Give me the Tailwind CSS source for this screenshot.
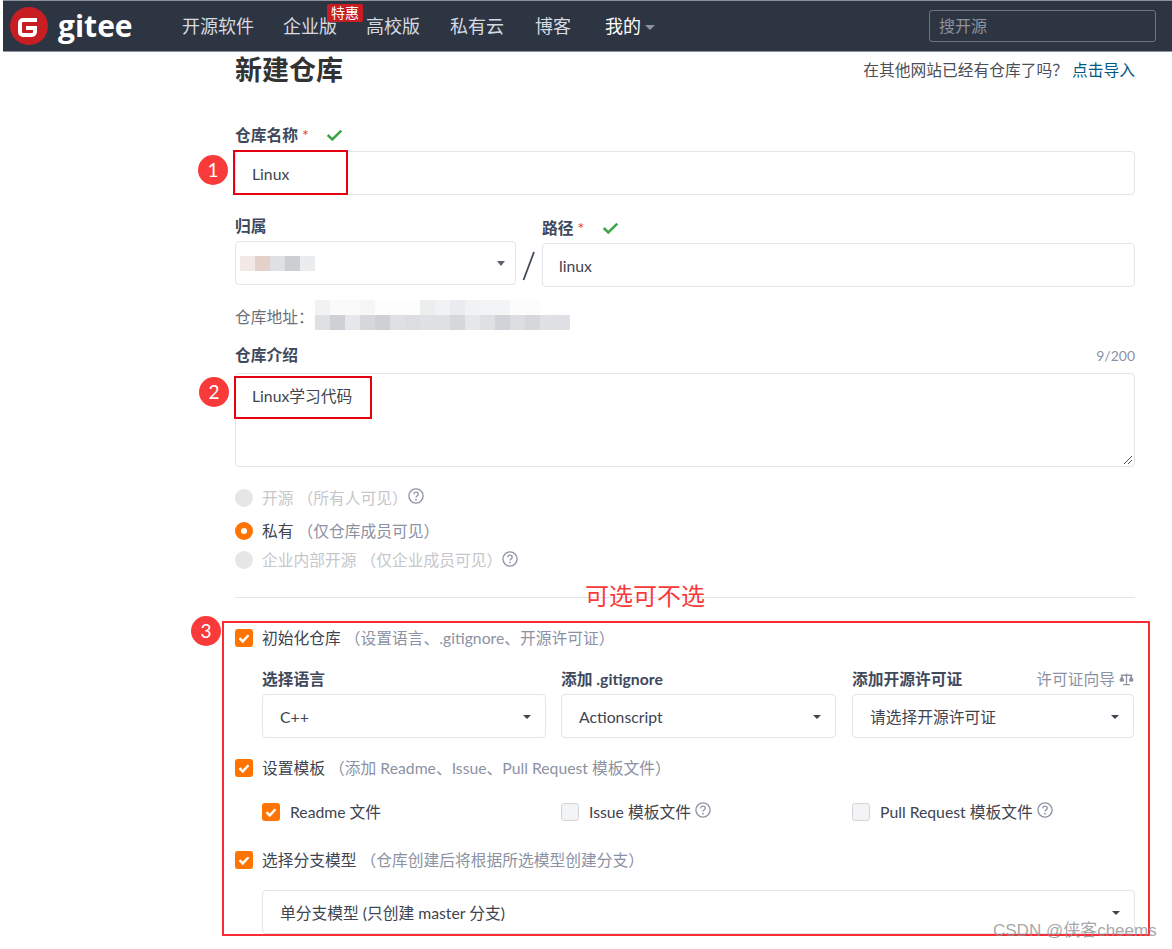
<!DOCTYPE html>
<html lang="zh-CN">
<head>
    <meta charset="UTF-8" />
    <meta name="viewport" content="width=device-width, initial-scale=1.0" />
    <title>新建仓库 - Gitee</title>
    <script src="https://cdn.jsdelivr.net/npm/@tailwindcss/browser@4"></script>
</head>
<body class="relative h-[949px] w-[1172px] overflow-hidden bg-white text-[15.75px] text-[#40485b] font-[family-name:Lato,'Noto_Sans_CJK_SC',sans-serif]">
<svg class="hidden">
    <symbol id="q" viewBox="0 0 16 16"><circle cx="8" cy="8" r="7.1" fill="none" stroke="#8c92a4" stroke-width="1.3"/><path d="M5.8 6.3c0-1.3 1-2.1 2.2-2.1s2.2.8 2.2 2c0 1.7-2.2 1.7-2.2 3.4" fill="none" stroke="#8c92a4" stroke-width="1.3"/><circle cx="8" cy="11.6" r=".9" fill="#8c92a4"/></symbol>
    <symbol id="tick" viewBox="0 0 18 18"><path d="M4.500 9.200l3.200 3.200 5.800-6.200" fill="none" stroke="#fff" stroke-width="2.400"/></symbol>
    <symbol id="ok" viewBox="0 0 16 12"><path d="M1.200 6l4.600 4.400L14.800 1.600" fill="none" stroke="#3fa648" stroke-width="2.600"/></symbol>
</svg>

<!-- 顶部导航 -->
<header class="mt-px ml-[3px] flex h-[51px] items-center border-b border-[#8d929c] bg-[#2e3542] shadow-[0_-1px_0_#8d929c]">
    <div class="mt-[-1px] ml-[7px] flex w-[172px] items-center gap-[10px]">
        <svg class="h-[38px] w-[38px] shrink-0" viewBox="0 0 38 38">
            <circle cx="19" cy="19" r="19" fill="#c71d23"/>
            <path d="M8 16a5 5 0 0 1 5-5h14v4H13a1 1 0 0 0-1 1v9a1 1 0 0 0 1 1h9a1 1 0 0 0 1-1v-2h-7v-4h11v6a6 6 0 0 1-5 5H13a5 5 0 0 1-5-5z" fill="#fff"/>
        </svg>
        <span class="text-[30px] leading-none font-bold text-white font-[family-name:'Open_Sans',sans-serif]">gitee</span>
    </div>
    <nav class="flex items-center gap-[29px] text-[18px] text-[#d7dae0]">
        <a>开源软件</a>
        <a class="relative">企业版<span class="absolute top-[-9px] left-[44px] rounded-[2px] bg-[#c71d23] px-[4px] text-[14px] leading-[18px] whitespace-nowrap text-white">特惠</span></a>
        <a>高校版</a>
        <a class="ml-px">私有云</a>
        <a class="ml-[2px]">博客</a>
        <a class="ml-[5px] flex items-center gap-[4px] text-white">我的<span class="mt-[3px] h-0 w-0 border-x-[5px] border-t-[5px] border-x-transparent border-t-[#8d929c]"></span></a>
    </nav>
    <div class="mr-[16px] ml-auto flex h-[32px] w-[227px] items-center rounded-[3px] border border-[#6e7480] pl-[9px] text-[16px] text-[#8d929c]">搜开源</div>
</header>

<main class="ml-[235px] w-[900px]">
    <div class="flex h-[36px] items-center justify-between">
        <h1 class="text-[27px] font-bold text-[#333]">新建仓库</h1>
        <p class="text-[#4a4f58]">在其他网站已经有仓库了吗？<a class="ml-[4px] text-[#005980]">点击导入</a></p>
    </div>

    <!-- 仓库名称 -->
    <label class="mt-[37px] flex h-[20px] items-center font-bold">仓库名称<span class="ml-[4px] text-[16px] font-normal text-[#e5393c]">*</span><svg class="ml-[17px] h-[12px] w-[17px]"><use href="#ok"/></svg></label>
    <div class="mt-[6px] flex h-[44px] items-center rounded-[4px] border border-[#e3e4ec] pt-px pl-[16px] text-[#40444f]">Linux</div>

    <!-- 归属 / 路径 -->
    <div class="mt-[21px] flex items-start">
        <div class="w-[281px]">
            <label class="block h-[20px] font-bold leading-[20px]">归属</label>
            <div class="mt-[5px] flex h-[44px] items-center rounded-[4px] border border-[#e3e4ec] pr-[10px] pl-[4px]">
                <div class="flex h-[15px]">
                    <span class="w-[15px] bg-[#f2e9e6]"></span><span class="w-[15px] bg-[#e4d2ca]"></span><span class="w-[15px] bg-[#dfe0e4]"></span><span class="w-[15px] bg-[#cdced3]"></span><span class="w-[15px] bg-[#ebecee]"></span>
                </div>
                <span class="ml-auto h-0 w-0 border-x-[4px] border-t-[5px] border-x-transparent border-t-[#5b6070]"></span>
            </div>
        </div>
        <svg class="mt-[35px] ml-[6px] h-[30px] w-[13px]" viewBox="0 0 13 30"><path d="M12 1L1.500 29" stroke="#40485b" stroke-width="1.800"/></svg>
        <div class="ml-[7px] flex-1">
            <label class="mt-[2px] flex h-[20px] items-center font-bold">路径<span class="ml-[4px] text-[16px] font-normal text-[#e5393c]">*</span><svg class="ml-[18px] h-[12px] w-[17px]"><use href="#ok"/></svg></label>
            <div class="mt-[5px] flex h-[44px] items-center rounded-[4px] border border-[#e3e4ec] pt-px pl-[16px] text-[#40444f]">linux</div>
        </div>
    </div>

    <!-- 仓库地址（打码） -->
    <div class="mt-[13px] flex h-[30px] items-end text-[#6a6f7a]">
        <span class="mb-px w-[80px]">仓库地址：</span>
        <div class="grid w-[255px] grid-cols-[repeat(17,15px)] grid-rows-[15px_15px]">
            <span class="bg-[#f1f2f3]"></span><span class="bg-[#fafafa]"></span><span class="bg-[#fafafa]"></span><span class="bg-[#f6f6f7]"></span><span class="bg-[#fdfdfd]"></span><span class="bg-[#fdfdfd]"></span><span class="bg-[#fdfdfd]"></span><span class="bg-[#eceded]"></span><span class="bg-[#f1f2f3]"></span><span class="bg-[#eaebee]"></span><span class="bg-[#f1f2f3]"></span><span class="bg-[#f3f4f5]"></span><span class="bg-[#f3f4f5]"></span><span class="bg-[#fcfcfc]"></span><span class="bg-[#fcfcfc]"></span><span></span><span></span>
            <span class="bg-[#dfe0e4]"></span><span class="bg-[#cfd0d5]"></span><span class="bg-[#e6e7ea]"></span><span class="bg-[#d6d7db]"></span><span class="bg-[#cfd0d5]"></span><span class="bg-[#dfe0e4]"></span><span class="bg-[#dcdde1]"></span><span class="bg-[#e0e1e4]"></span><span class="bg-[#dfe0e4]"></span><span class="bg-[#d6d7db]"></span><span class="bg-[#e6e7ea]"></span><span class="bg-[#dfe0e4]"></span><span class="bg-[#d2d3d8]"></span><span class="bg-[#dcdde1]"></span><span class="bg-[#d6d7db]"></span><span class="bg-[#e0e1e4]"></span><span class="bg-[#dfe0e4]"></span>
        </div>
    </div>

    <!-- 仓库介绍 -->
    <div class="mt-[15px] flex h-[20px] items-center justify-between">
        <label class="font-bold">仓库介绍</label>
        <span class="text-[14px] text-[#8c92a4]">9/200</span>
    </div>
    <div class="relative mt-[8px] h-[94px] rounded-[4px] border border-[#e3e4ec] pt-[10px] pl-[16px] text-[#40444f]">
        Linux学习代码
        <svg class="absolute right-[2px] bottom-[2px] h-[9px] w-[9px]" viewBox="0 0 9 9"><path d="M9 1L1 9M9 5L5 9" stroke="#555" stroke-width="1"/></svg>
    </div>

    <!-- 可见性 -->
    <div class="mt-[21px] flex h-[20px] items-center">
        <span class="h-[18px] w-[18px] rounded-full bg-[#e6e6e6]"></span>
        <span class="ml-[9px] text-[#c6c7ca]">开源 （所有人可见）</span>
        <svg class="mt-[-4px] h-[16px] w-[16px]"><use href="#q"/></svg>
    </div>
    <div class="mt-[13px] flex h-[20px] items-center">
        <span class="flex h-[18px] w-[18px] items-center justify-center rounded-full bg-[#ff7300]"><span class="h-[6px] w-[6px] rounded-full bg-white"></span></span>
        <span class="ml-[9px] text-[#40444f]">私有</span>
        <span class="text-[#8c92a4]">&nbsp;（仅仓库成员可见）</span>
    </div>
    <div class="mt-[9px] flex h-[20px] items-center">
        <span class="h-[18px] w-[18px] rounded-full bg-[#e6e6e6]"></span>
        <span class="ml-[9px] text-[#c6c7ca]">企业内部开源 （仅企业成员可见）</span>
        <svg class="mt-[-2px] h-[16px] w-[16px]"><use href="#q"/></svg>
    </div>

    <hr class="mt-[27px] border-[#e3e4ec]" />

    <!-- 初始化仓库 -->
    <div class="mt-[30px] flex h-[20px] items-center">
        <svg class="h-[18px] w-[18px] rounded-[3px] bg-[#ff7300]"><use href="#tick"/></svg>
        <span class="ml-[9px] text-[#40444f]">初始化仓库</span>
        <span class="text-[#8c92a4]">&nbsp;（设置语言、.gitignore、开源许可证）</span>
    </div>
    <div class="mt-[21px] ml-[27px] grid grid-cols-[284px_275px_283px] gap-x-[15px]">
        <div>
            <label class="block h-[20px] leading-[20px] font-bold">选择语言</label>
            <div class="mt-[5px] flex h-[44px] items-center justify-between rounded-[4px] border border-[#e3e4ec] pt-px pr-[14px] pl-[17px] text-[#40444f]">C++<span class="h-0 w-0 border-x-[4px] border-t-[4px] border-x-transparent border-t-[#40444f]"></span></div>
        </div>
        <div>
            <label class="block h-[20px] leading-[20px] font-bold">添加 .gitignore</label>
            <div class="mt-[5px] flex h-[44px] items-center justify-between rounded-[4px] border border-[#e3e4ec] pt-px pr-[14px] pl-[17px] text-[#40444f]">Actionscript<span class="h-0 w-0 border-x-[4px] border-t-[4px] border-x-transparent border-t-[#40444f]"></span></div>
        </div>
        <div class="ml-px">
            <div class="flex h-[20px] items-center justify-between">
                <label class="font-bold">添加开源许可证</label>
                <span class="flex items-center gap-[4px] text-[#8c92a4]">许可证向导
                    <svg class="h-[14px] w-[15px]" viewBox="0 0 16 14"><path d="M8 1v11M4.500 13h7M2 3h12" stroke="#8c92a4" stroke-width="1.400" fill="none"/><path d="M.5 8L3 3l2.500 5a2.500 2 0 0 1-5 0zM10.500 8L13 3l2.500 5a2.500 2 0 0 1-5 0z" fill="#8c92a4"/></svg>
                </span>
            </div>
            <div class="mt-[5px] flex h-[44px] items-center justify-between rounded-[4px] border border-[#e3e4ec] pt-px pr-[14px] pl-[17px] text-[#40444f]">请选择开源许可证<span class="h-0 w-0 border-x-[4px] border-t-[4px] border-x-transparent border-t-[#40444f]"></span></div>
        </div>
    </div>

    <!-- 设置模板 -->
    <div class="mt-[20px] flex h-[20px] items-center">
        <svg class="h-[18px] w-[18px] rounded-[3px] bg-[#ff7300]"><use href="#tick"/></svg>
        <span class="ml-[9px] text-[#40444f]">设置模板</span>
        <span class="text-[#8c92a4]">&nbsp;（添加 Readme、Issue、Pull Request 模板文件）</span>
    </div>
    <div class="mt-[22px] ml-[27px] grid h-[20px] grid-cols-[299px_291px_1fr] items-center text-[#40444f]">
        <div class="flex items-center">
            <svg class="h-[18px] w-[18px] rounded-[3px] bg-[#ff7300]"><use href="#tick"/></svg>
            <span class="ml-[10px]">Readme 文件</span>
        </div>
        <div class="flex items-center">
            <span class="h-[18px] w-[18px] rounded-[3px] border border-[#d4d4d8] bg-[#f3f4f6]"></span>
            <span class="ml-[10px]">Issue 模板文件</span>
            <svg class="mt-[-4px] ml-[4px] h-[16px] w-[16px]"><use href="#q"/></svg>
        </div>
        <div class="flex items-center">
            <span class="h-[18px] w-[18px] rounded-[3px] border border-[#d4d4d8] bg-[#f3f4f6]"></span>
            <span class="ml-[10px]">Pull Request 模板文件</span>
            <svg class="mt-[-4px] ml-[4px] h-[16px] w-[16px]"><use href="#q"/></svg>
        </div>
    </div>

    <!-- 分支模型 -->
    <div class="mt-[30px] flex h-[20px] items-center">
        <svg class="h-[18px] w-[18px] rounded-[3px] bg-[#ff7300]"><use href="#tick"/></svg>
        <span class="ml-[9px] text-[#40444f]">选择分支模型</span>
        <span class="text-[#8c92a4]">&nbsp;（仓库创建后将根据所选模型创建分支）</span>
    </div>
    <div class="mt-[20px] ml-[27px] flex h-[44px] items-center justify-between rounded-[4px] border border-[#e3e4ec] pt-px pr-[14px] pl-[17px] text-[#40444f]">单分支模型 (只创建 master 分支)<span class="h-0 w-0 border-x-[4px] border-t-[4px] border-x-transparent border-t-[#40444f]"></span></div>
</main>

<!-- 截图上的红色标注 -->
<div class="absolute top-[150px] left-[233px] h-[45px] w-[115px] border-2 border-[#e60012]"></div>
<div class="absolute top-[376px] left-[234px] h-[43px] w-[138px] border-2 border-[#e60012]"></div>
<div class="absolute top-[621px] left-[222px] h-[315px] w-[928px] border-2 border-[#fb2b33]"></div>
<span class="absolute top-[155px] left-[198px] flex h-[30px] w-[30px] items-center justify-center rounded-full bg-[#f93a3a] text-[19px] text-white">1</span>
<span class="absolute top-[377px] left-[199px] flex h-[30px] w-[30px] items-center justify-center rounded-full bg-[#f93a3a] text-[19px] text-white">2</span>
<span class="absolute top-[616px] left-[191px] flex h-[30px] w-[30px] items-center justify-center rounded-full bg-[#f93a3a] text-[19px] text-white">3</span>
<span class="absolute top-[581px] left-[585px] text-[24px] leading-[30px] text-[#f93a3a]">可选可不选</span>
<span class="absolute top-[921px] left-[993px] text-[17px] leading-[20px] whitespace-nowrap text-[#8f8f8f]/80 font-[family-name:'Liberation_Sans','Noto_Sans_CJK_SC',sans-serif]">CSDN @侠客cheems</span>
</body>
</html>
